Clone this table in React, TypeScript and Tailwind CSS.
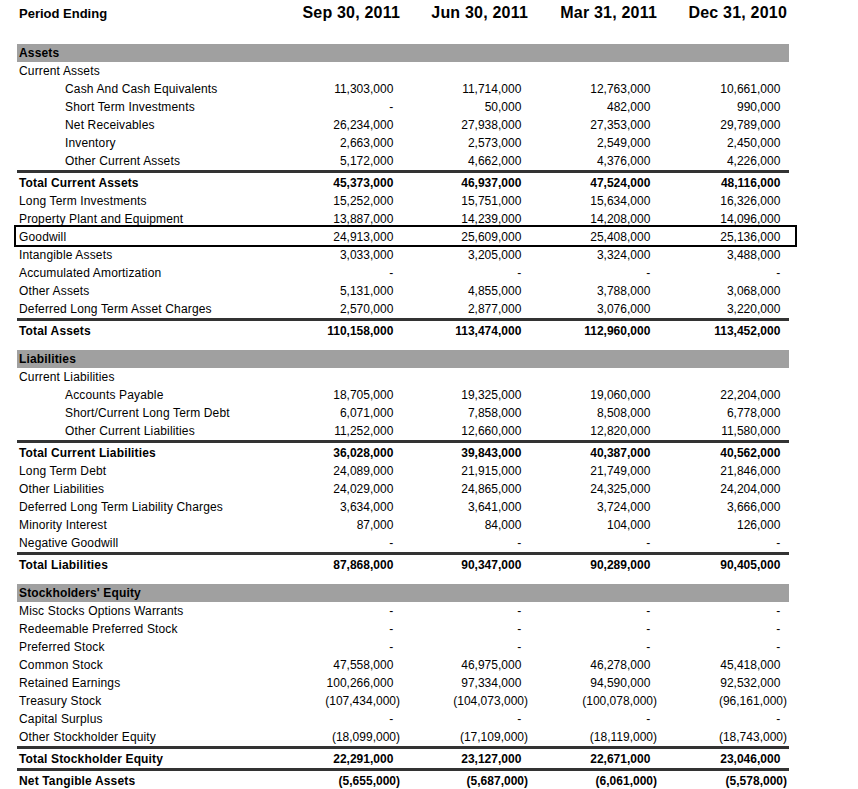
type Line =
  | { kind: 'bar'; label: string }
  | { kind: 'sep' }
  | { kind: 'gap' }
  | { kind: 'row'; label: string; indent?: boolean; bold?: boolean; values?: string[]; boxed?: boolean }

const dash = ['-', '-', '-', '-']

const lines: Line[] = [
  { kind: 'bar', label: 'Assets' },
  { kind: 'row', label: 'Current Assets' },
  { kind: 'row', label: 'Cash And Cash Equivalents', indent: true, values: ['11,303,000', '11,714,000', '12,763,000', '10,661,000'] },
  { kind: 'row', label: 'Short Term Investments', indent: true, values: ['-', '50,000', '482,000', '990,000'] },
  { kind: 'row', label: 'Net Receivables', indent: true, values: ['26,234,000', '27,938,000', '27,353,000', '29,789,000'] },
  { kind: 'row', label: 'Inventory', indent: true, values: ['2,663,000', '2,573,000', '2,549,000', '2,450,000'] },
  { kind: 'row', label: 'Other Current Assets', indent: true, values: ['5,172,000', '4,662,000', '4,376,000', '4,226,000'] },
  { kind: 'sep' },
  { kind: 'row', label: 'Total Current Assets', bold: true, values: ['45,373,000', '46,937,000', '47,524,000', '48,116,000'] },
  { kind: 'row', label: 'Long Term Investments', values: ['15,252,000', '15,751,000', '15,634,000', '16,326,000'] },
  { kind: 'row', label: 'Property Plant and Equipment', values: ['13,887,000', '14,239,000', '14,208,000', '14,096,000'] },
  { kind: 'row', label: 'Goodwill', boxed: true, values: ['24,913,000', '25,609,000', '25,408,000', '25,136,000'] },
  { kind: 'row', label: 'Intangible Assets', values: ['3,033,000', '3,205,000', '3,324,000', '3,488,000'] },
  { kind: 'row', label: 'Accumulated Amortization', values: dash },
  { kind: 'row', label: 'Other Assets', values: ['5,131,000', '4,855,000', '3,788,000', '3,068,000'] },
  { kind: 'row', label: 'Deferred Long Term Asset Charges', values: ['2,570,000', '2,877,000', '3,076,000', '3,220,000'] },
  { kind: 'sep' },
  { kind: 'row', label: 'Total Assets', bold: true, values: ['110,158,000', '113,474,000', '112,960,000', '113,452,000'] },
  { kind: 'gap' },
  { kind: 'bar', label: 'Liabilities' },
  { kind: 'row', label: 'Current Liabilities' },
  { kind: 'row', label: 'Accounts Payable', indent: true, values: ['18,705,000', '19,325,000', '19,060,000', '22,204,000'] },
  { kind: 'row', label: 'Short/Current Long Term Debt', indent: true, values: ['6,071,000', '7,858,000', '8,508,000', '6,778,000'] },
  { kind: 'row', label: 'Other Current Liabilities', indent: true, values: ['11,252,000', '12,660,000', '12,820,000', '11,580,000'] },
  { kind: 'sep' },
  { kind: 'row', label: 'Total Current Liabilities', bold: true, values: ['36,028,000', '39,843,000', '40,387,000', '40,562,000'] },
  { kind: 'row', label: 'Long Term Debt', values: ['24,089,000', '21,915,000', '21,749,000', '21,846,000'] },
  { kind: 'row', label: 'Other Liabilities', values: ['24,029,000', '24,865,000', '24,325,000', '24,204,000'] },
  { kind: 'row', label: 'Deferred Long Term Liability Charges', values: ['3,634,000', '3,641,000', '3,724,000', '3,666,000'] },
  { kind: 'row', label: 'Minority Interest', values: ['87,000', '84,000', '104,000', '126,000'] },
  { kind: 'row', label: 'Negative Goodwill', values: dash },
  { kind: 'sep' },
  { kind: 'row', label: 'Total Liabilities', bold: true, values: ['87,868,000', '90,347,000', '90,289,000', '90,405,000'] },
  { kind: 'gap' },
  { kind: 'bar', label: "Stockholders' Equity" },
  { kind: 'row', label: 'Misc Stocks Options Warrants', values: dash },
  { kind: 'row', label: 'Redeemable Preferred Stock', values: dash },
  { kind: 'row', label: 'Preferred Stock', values: dash },
  { kind: 'row', label: 'Common Stock', values: ['47,558,000', '46,975,000', '46,278,000', '45,418,000'] },
  { kind: 'row', label: 'Retained Earnings', values: ['100,266,000', '97,334,000', '94,590,000', '92,532,000'] },
  { kind: 'row', label: 'Treasury Stock', values: ['(107,434,000)', '(104,073,000)', '(100,078,000)', '(96,161,000)'] },
  { kind: 'row', label: 'Capital Surplus', values: dash },
  { kind: 'row', label: 'Other Stockholder Equity', values: ['(18,099,000)', '(17,109,000)', '(18,119,000)', '(18,743,000)'] },
  { kind: 'sep' },
  { kind: 'row', label: 'Total Stockholder Equity', bold: true, values: ['22,291,000', '23,127,000', '22,671,000', '23,046,000'] },
  { kind: 'sep' },
  { kind: 'row', label: 'Net Tangible Assets', bold: true, values: ['(5,655,000)', '(5,687,000)', '(6,061,000)', '(5,578,000)'] },
]

const periods = ['Sep 30, 2011', 'Jun 30, 2011', 'Mar 31, 2011', 'Dec 31, 2010']

// positive figures carry two trailing spaces so the ")" of negatives hangs out
function fmt(v: string) {
  return v.startsWith('(') ? v : v + '\u00a0\u00a0'
}

const cols = 'grid grid-cols-[256px_129px_128px_129px_130px]'

function Row({ line }: { line: Extract<Line, { kind: 'row' }> }) {
  return (
    <div className={`${cols} relative h-[18px] leading-[18px] ${line.bold ? 'font-bold' : ''}`}>
      <div className={`whitespace-nowrap tracking-[0.15px] ${line.indent ? 'pl-[48px]' : 'pl-[2px]'}`}>{line.label}</div>
      {(line.values ?? ['', '', '', '']).map((v, i) => (
        <div key={i} className="text-right pr-[2px] whitespace-nowrap">
          {v ? fmt(v) : ''}
        </div>
      ))}
      {line.boxed && (
        <div className="absolute -left-[3px] -top-[3px] w-[783px] h-[22px] border-2 border-black pointer-events-none" />
      )}
    </div>
  )
}

export default function App() {
  return (
    <div className="bg-white min-h-screen text-black pl-[17px] text-[12px]" style={{ fontFamily: '"Liberation Sans", Arial, sans-serif' }}>
      <div className="w-[772px]">
        <div className={`${cols} h-[28px] items-center`}>
          <div className="pl-[2px] text-[13px] font-bold">Period Ending</div>
          {periods.map((p) => (
            <div key={p} className="text-right pr-[2px] text-[16px] font-bold whitespace-nowrap -mt-[2px] tracking-[0.2px]">
              {p}
            </div>
          ))}
        </div>
        <div className="h-[16px]" />
        {lines.map((line, i) => {
          if (line.kind === 'bar')
            return (
              <div key={i} className="h-[18px] leading-[18px] bg-[#a0a0a0] font-bold pl-[2px] tracking-[0.15px]">
                {line.label}
              </div>
            )
          if (line.kind === 'sep') return <div key={i} className="h-[4px] border-t-[3px] border-[#333333]" />
          if (line.kind === 'gap') return <div key={i} className="h-[10px]" />
          return <Row key={i} line={line} />
        })}
      </div>
    </div>
  )
}
